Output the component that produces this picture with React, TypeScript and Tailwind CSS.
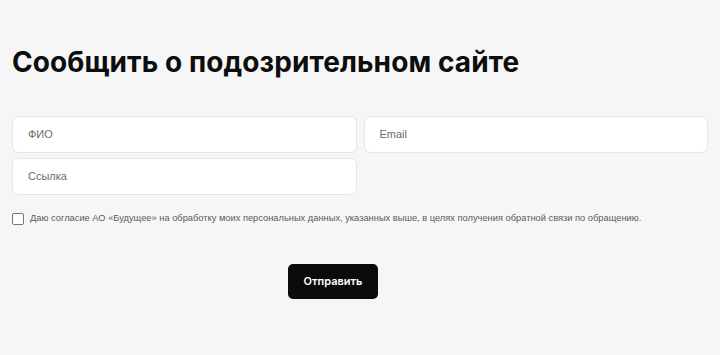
import React from "react";

export default function App() {
  return (
    <div className="w-[720px] h-[355px] bg-[#f6f6f6] overflow-hidden" style={{ fontFamily: "'Liberation Sans', Arial, sans-serif" }}>
      <div className="px-[12px] pt-[44px]">
        <h1 className="text-[28px] leading-[36px] font-bold text-[#0d0d0d] tracking-[0.1px]" style={{ fontFamily: "Inter, 'Noto Sans', sans-serif" }}>
          Сообщить о подозрительном сайте
        </h1>
        <div className="mt-[36px] grid grid-cols-2 gap-x-[7px] gap-y-[5px]">
          <div className="h-[37px] bg-white border border-[#e6e6e6] rounded-[6px] flex items-center pl-[15px] text-[11px] text-[#6b6b6b]">ФИО</div>
          <div className="h-[37px] bg-white border border-[#e6e6e6] rounded-[6px] flex items-center pl-[15px] text-[11px] text-[#6b6b6b]">Email</div>
          <div className="h-[37px] bg-white border border-[#e6e6e6] rounded-[6px] flex items-center pl-[15px] text-[11px] text-[#6b6b6b]">Ссылка</div>
        </div>
        <div className="mt-[17px] flex items-center gap-[6px]">
          <div className="w-[12px] h-[12px] border border-[#777] rounded-[2px] bg-white" />
          <span className="text-[9.3px] text-[#5a5a5a]">
            Даю согласие АО «Будущее» на обработку моих персональных данных, указанных выше, в целях получения обратной связи по обращению.
          </span>
        </div>
        <div className="mt-[38px] ml-[276px]">
          <button className="w-[90px] h-[35px] bg-[#0b0b0c] rounded-[5px] text-white text-[11px] font-semibold" style={{ fontFamily: "Inter, sans-serif" }}>
            Отправить
          </button>
        </div>
      </div>
    </div>
  );
}
